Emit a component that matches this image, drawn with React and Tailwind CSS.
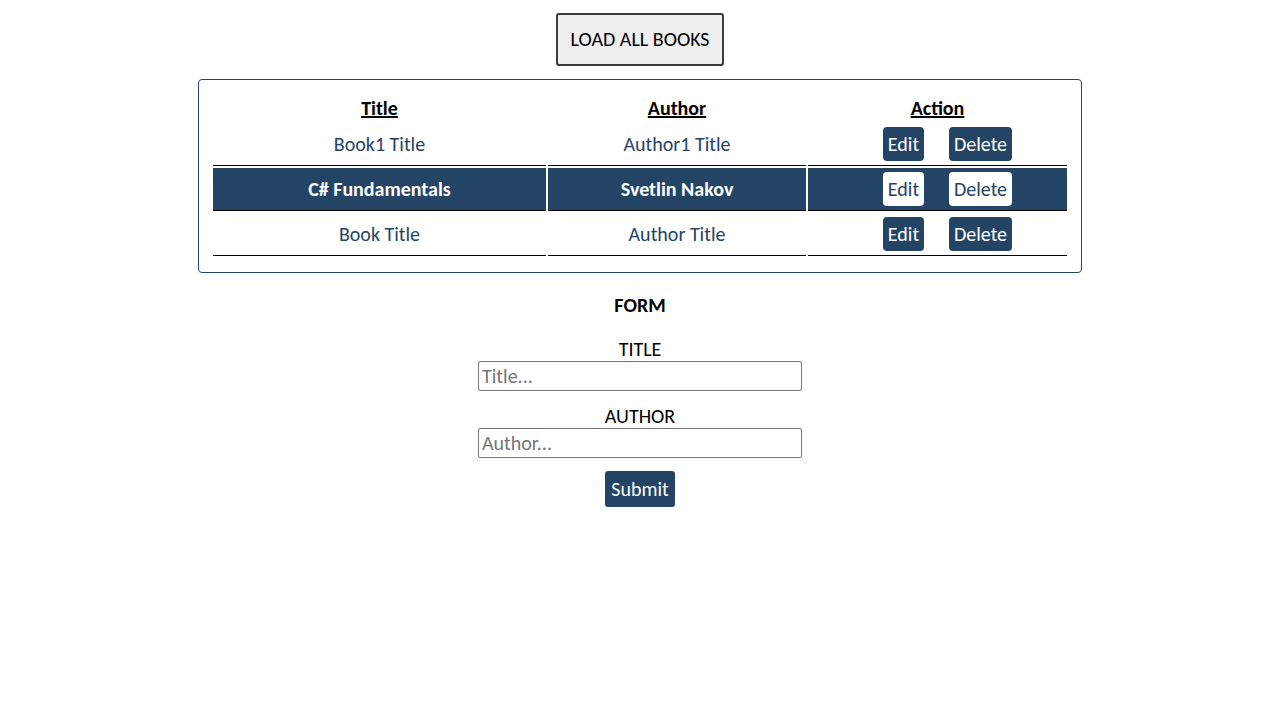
import React from 'react';

const books = [
  { id: 1, title: 'Book1 Title', author: 'Author1 Title' },
  { id: 2, title: 'C# Fundamentals', author: 'Svetlin Nakov', selected: true },
  { id: 3, title: 'Book Title', author: 'Author Title' },
];

const App = () => {
  return (
    <div className="min-h-screen bg-white text-center text-black font-['Calibri','Carlito','Lato',sans-serif] text-[20px]">
      <div className="pt-[13px]">
        <button className="h-[53px] w-[168px] rounded-[3px] border-2 border-[#3b3b3b] bg-[#efefef] pb-[2px] text-[20px] text-black">
          LOAD ALL BOOKS
        </button>
      </div>

      <div className="mx-auto mt-[13px] w-[884px] rounded-[4px] border border-[#234466] px-[12px] pt-[13px] pb-[14px]">
        <table className="w-full border-separate border-spacing-[2px]">
          <thead>
            <tr>
              <th className="w-[333px] p-0 font-bold underline leading-[26px]">Title</th>
              <th className="w-[258px] p-0 font-bold underline leading-[26px]">Author</th>
              <th className="p-0 font-bold underline leading-[26px]">Action</th>
            </tr>
          </thead>
          <tbody>
            {books.map((book) => {
              const cell = book.selected
                ? 'bg-[#244466] text-white font-semibold'
                : 'text-[#244466]';
              return (
                <tr key={book.id}>
                  <td className={`border-b border-black py-[4px] ${cell}`}>{book.title}</td>
                  <td className={`border-b border-black py-[4px] ${cell}`}>{book.author}</td>
                  <td className={`border-b border-black py-[4px] ${book.selected ? 'bg-[#244466]' : ''}`}>
                    <div className="flex justify-center gap-[25px] pl-[20px]">
                      <button
                        className={`h-[34px] w-[41px] rounded-[4px] ${
                          book.selected ? 'bg-white text-[#244466]' : 'bg-[#244466] text-white'
                        }`}
                      >
                        Edit
                      </button>
                      <button
                        className={`h-[34px] w-[63px] rounded-[4px] ${
                          book.selected ? 'bg-white text-[#244466]' : 'bg-[#244466] text-white'
                        }`}
                      >
                        Delete
                      </button>
                    </div>
                  </td>
                </tr>
              );
            })}
          </tbody>
        </table>
      </div>

      <form className="mx-auto mt-[20px] flex w-[324px] flex-col items-center">
        <h3 className="font-bold leading-[24px]">FORM</h3>
        <label className="mt-[20px] leading-[24px]">TITLE</label>
        <input
          className="h-[30px] w-[324px] rounded-[2px] border border-[#767676] px-[3px] text-[20px] placeholder:text-[#757575]"
          placeholder="Title..."
        />
        <label className="mt-[13px] leading-[24px]">AUTHOR</label>
        <input
          className="h-[30px] w-[324px] rounded-[2px] border border-[#767676] px-[3px] text-[20px] placeholder:text-[#757575]"
          placeholder="Author..."
        />
        <button type="button" className="mt-[13px] h-[36px] w-[70px] rounded-[3px] bg-[#244466] text-white">
          Submit
        </button>
      </form>
    </div>
  );
};

export default App;
